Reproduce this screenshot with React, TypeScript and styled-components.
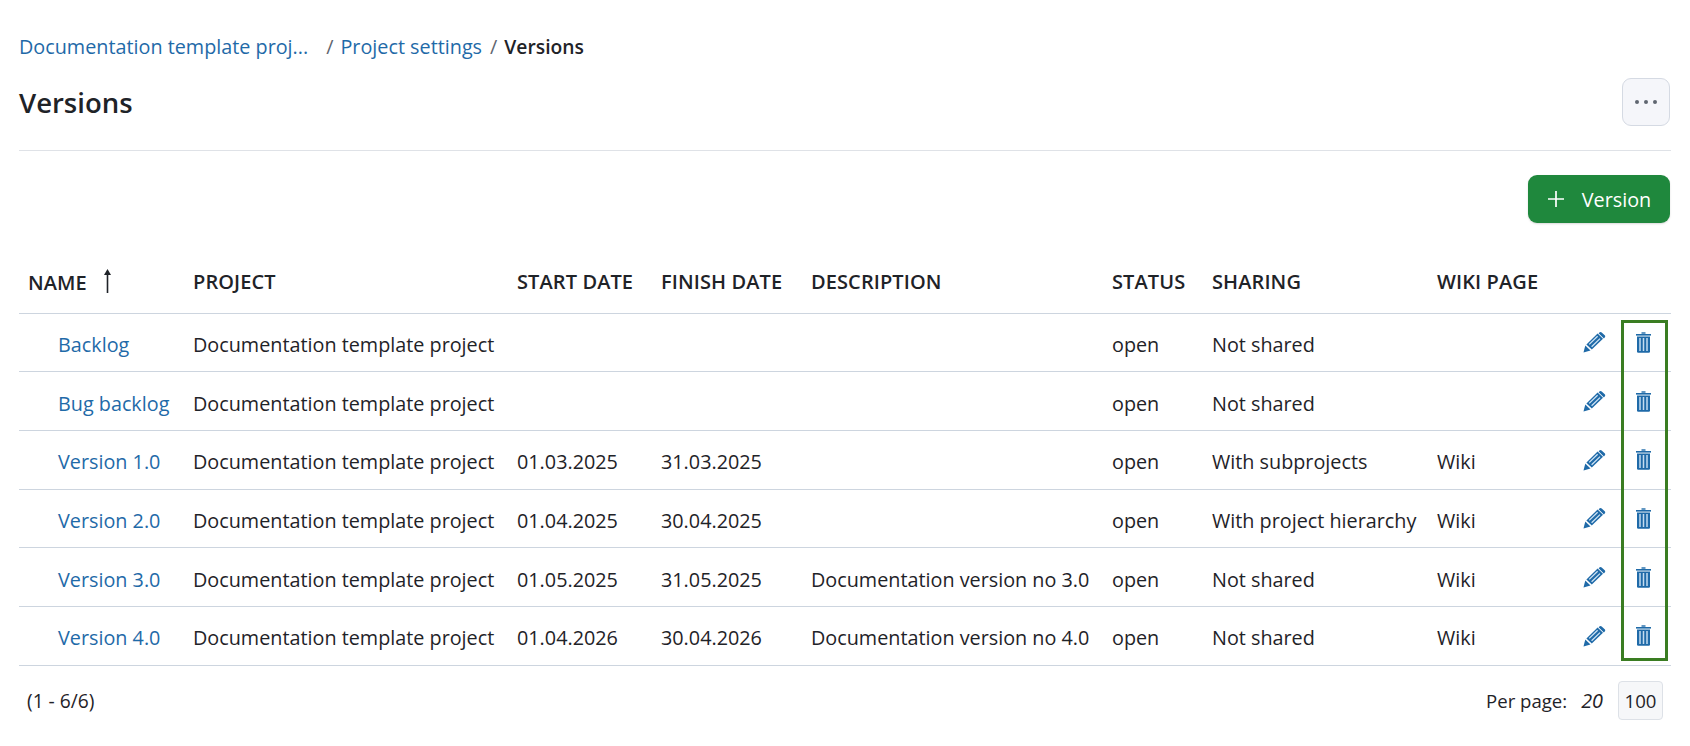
import React from "react";
import styled, { createGlobalStyle } from "styled-components";

const Global = createGlobalStyle`
  html, body { margin: 0; padding: 0; background: #fff; }
  body { font-family: "Open Sans", "Noto Sans", "Liberation Sans", sans-serif; color: #1f2328; font-size: 19.8px; }
`;
const Page = styled.div`
  width: 1690px; height: 746px; box-sizing: border-box; padding: 28px 19px 0 19px; overflow: hidden;
`;
const Crumbs = styled.nav`
  display: flex; align-items: center; height: 37px; font-size: 19.8px; color: #5f6670;
`;
const Link = styled.a`
  color: #1f6aa8; text-decoration: none;
`;
const Sep = styled.span<{ $wide?: boolean }>`
  margin: 0 7px 0 ${p => (p.$wide ? "18px" : "8px")};
`;
const Current = styled.span`
  font-weight: 600; font-size: 19.3px; color: #1f2328;
`;
const TitleRow = styled.header`
  display: flex; align-items: center; justify-content: space-between; height: 75px; padding-bottom: 10px;
  border-bottom: 1px solid #dfe2e7;
`;
const Title = styled.h1`
  margin: 0; font-size: 27.5px; font-weight: 600; color: #1f2328;
`;
const MoreButton = styled.button`
  width: 48px; height: 48px; border: 1px solid #d5dae3; border-radius: 9px; background: #f5f6fa;
  display: flex; align-items: center; justify-content: center; gap: 5px; padding: 0; margin: -1px 1px 0 0;
`;
const Dot = styled.i`
  width: 4px; height: 4px; border-radius: 50%; background: #5f6670; display: block;
`;
const Actions = styled.div`
  display: flex; justify-content: flex-end; padding-top: 24px; height: 48px; margin-bottom: 31px;
`;
const AddButton = styled.button`
  width: 142px; height: 48px; border: 0; padding: 0; border-radius: 9px; background: #1f883d; color: #fff;
  font: inherit; display: flex; align-items: center; justify-content: center; gap: 17px; margin-right: 1px;
  box-shadow: 0 1px 2px rgba(0,0,0,.15);
`;
const TableWrap = styled.div`
  position: relative;
`;
const Table = styled.table`
  width: 100%; table-layout: fixed; border-collapse: collapse; font-size: 19.8px;
`;
const Th = styled.th<{ $w: number }>`
  width: ${p => p.$w}px; height: 59px; box-sizing: border-box; padding: 0 0 3px 9px; text-align: left;
  font-size: 20px; letter-spacing: 0.1px; font-weight: 600; text-transform: uppercase; white-space: nowrap; color: #1f2328;
  border-bottom: 1px solid #cdd5df;
`;
const Tr = styled.tr`
  height: 58.7px;
`;
const Td = styled.td`
  padding: 4px 0 0 9px; white-space: nowrap; border-bottom: 1px solid #cdd5df; color: #1f2328;
`;
const NameCell = styled(Td)`
  padding-left: 39px;
`;
const IconCell = styled(Td)<{ $shift?: number }>`
  padding: 0 0 0 ${p => p.$shift ?? 0}px; text-align: center; line-height: 0;
`;
const SortArrow = styled.svg`
  margin-left: 16px; vertical-align: -4px;
`;
const Highlight = styled.div`
  position: absolute; left: 1602px; top: 66px; width: 47px; height: 341px; box-sizing: border-box;
  border: 3px solid #3a7d22; pointer-events: none;
`;
const Footer = styled.footer`
  display: flex; align-items: center; justify-content: space-between; padding: 15px 8px 0 8px;
`;
const Count = styled.span` font-size: 19.2px; `;
const PerPage = styled.div`
  display: flex; align-items: center; font-size: 18.6px;
`;
const PerCurrent = styled.em` margin: 0 15px 0 14px; font-size: 19.8px; `;
const PerButton = styled.span`
  width: 45px; height: 39px; display: flex; align-items: center; justify-content: center;
  border: 1px solid #dde1e7; border-radius: 4px; background: #f6f7f9; box-sizing: border-box;
`;

const Pencil = () => (
  <svg width="23" height="22" viewBox="0 0 23 22" style={{ display: "inline-block" }}>
    <path d="M0.5 21.5l1.8-7 5.2 5z" fill="#1f6aa8" />
    <path d="M3.4 13.4L14.6 2.6l5.4 5.2L8.8 18.6z" fill="#1f6aa8" />
    <path d="M6.2 13.4l8.4-8.2M8.6 15.8l8.4-8.2" stroke="#cfe4f5" strokeWidth="1.3" fill="none" />
    <path d="M16.4 1.4c.7-.7 1.6-.7 2.3 0l3 2.9c.7.7.7 1.6 0 2.3l-.8.8-5.3-5.2z" fill="#1f6aa8" />
  </svg>
);
const Trash = () => (
  <svg width="15" height="21" viewBox="0 0 15 21" style={{ display: "inline-block" }}>
    <path d="M5.5 1h4" stroke="#1f6aa8" strokeWidth="1.4" />
    <rect x="0" y="2" width="15" height="1.6" fill="#1f6aa8" />
    <path d="M1 4.6h13v15a1.2 1.2 0 0 1-1.2 1.2H2.2A1.2 1.2 0 0 1 1 19.6z" fill="#1f6aa8" />
    <path d="M4 6v13M7.5 6v13M11 6v13" stroke="#c4dcf0" strokeWidth="1.5" />
  </svg>
);

type Row = { name: string; start?: string; finish?: string; desc?: string; sharing: string; wiki?: boolean };
const rows: Row[] = [
  { name: "Backlog", sharing: "Not shared" },
  { name: "Bug backlog", sharing: "Not shared" },
  { name: "Version 1.0", start: "01.03.2025", finish: "31.03.2025", sharing: "With subprojects", wiki: true },
  { name: "Version 2.0", start: "01.04.2025", finish: "30.04.2025", sharing: "With project hierarchy", wiki: true },
  { name: "Version 3.0", start: "01.05.2025", finish: "31.05.2025", desc: "Documentation version no 3.0", sharing: "Not shared", wiki: true },
  { name: "Version 4.0", start: "01.04.2026", finish: "30.04.2026", desc: "Documentation version no 4.0", sharing: "Not shared", wiki: true },
];

export default function App() {
  return (
    <Page>
      <Global />
      <Crumbs>
        <Link>Documentation template proj...</Link>
        <Sep $wide>/</Sep>
        <Link>Project settings</Link>
        <Sep>/</Sep>
        <Current>Versions</Current>
      </Crumbs>
      <TitleRow>
        <Title>Versions</Title>
        <MoreButton aria-label="More"><Dot /><Dot /><Dot /></MoreButton>
      </TitleRow>
      <Actions>
        <AddButton>
          <svg width="18" height="18" viewBox="0 0 18 18"><path d="M9 1v16M1 9h16" stroke="#fff" strokeWidth="1.7" /></svg>
          Version
        </AddButton>
      </Actions>
      <TableWrap>
        <Table>
          <thead>
            <tr>
              <Th $w={165}>Name
                <SortArrow width="9" height="26" viewBox="0 0 9 26"><path d="M4.5 1L1 7h7z" fill="#1f2328" /><path d="M4.5 5v20" stroke="#1f2328" strokeWidth="1.6" /></SortArrow>
              </Th>
              <Th $w={324}>Project</Th>
              <Th $w={144}>Start date</Th>
              <Th $w={150}>Finish date</Th>
              <Th $w={301}>Description</Th>
              <Th $w={100}>Status</Th>
              <Th $w={225}>Sharing</Th>
              <Th $w={128}>Wiki page</Th>
              <Th $w={58} />
              <Th $w={57} />
            </tr>
          </thead>
          <tbody>
            {rows.map(r => (
              <Tr key={r.name}>
                <NameCell><Link>{r.name}</Link></NameCell>
                <Td>Documentation template project</Td>
                <Td>{r.start}</Td>
                <Td>{r.finish}</Td>
                <Td>{r.desc}</Td>
                <Td>open</Td>
                <Td>{r.sharing}</Td>
                <Td>{r.wiki && "Wiki"}</Td>
                <IconCell $shift={18}><Pencil /></IconCell>
                <IconCell $shift={2}><Trash /></IconCell>
              </Tr>
            ))}
          </tbody>
        </Table>
        <Highlight />
      </TableWrap>
      <Footer>
        <Count>(1 - 6/6)</Count>
        <PerPage>Per page:<PerCurrent>20</PerCurrent><PerButton>100</PerButton></PerPage>
      </Footer>
    </Page>
  );
}
